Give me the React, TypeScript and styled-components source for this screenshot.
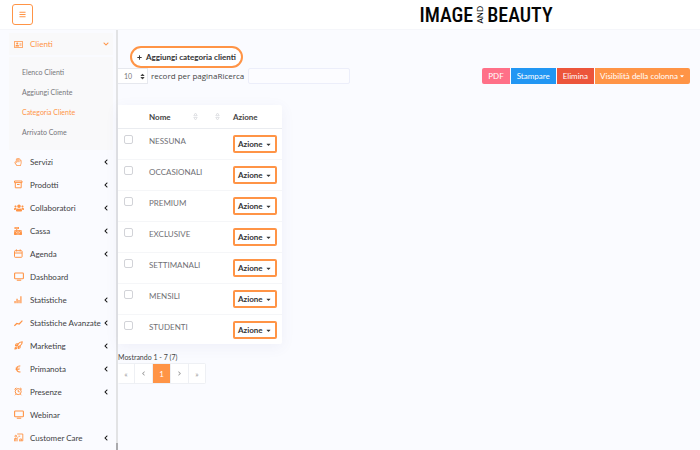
import React from "react";
import styled, { createGlobalStyle } from "styled-components";
import {
  FaBars,
  FaCaretDown,
  FaCashRegister,
  FaChevronDown,
  FaChevronLeft,
  FaChevronRight,
  FaEuroSign,
  FaPlus,
  FaRegAddressCard,
  FaRegHandPaper,
  FaSort,
  FaUsers,
} from "react-icons/fa";
import { LuRocket } from "react-icons/lu";

const orange = "#ff9446";

const GlobalStyle = createGlobalStyle`
  * { box-sizing: border-box; }
  body {
    margin: 0;
    background: #fafbff;
    color: #444;
    font: 8px/12px Lato, "Noto Sans", sans-serif;
  }
  button, input, select { font: inherit; color: inherit; margin: 0; }
  button { cursor: pointer; }
  a { color: inherit; text-decoration: none; }
  ul { list-style: none; margin: 0; padding: 0; }
`;

const Page = styled.div`
  display: flex;
  flex-direction: column;
  height: 100vh;
  overflow: hidden;
`;

const Header = styled.header`
  flex: none;
  display: grid;
  grid-template-columns: 118px 1fr;
  align-items: center;
  height: 30px;
  background: #fff;
  border-bottom: 1px solid #f5f6fa;
`;

const MenuButton = styled.button`
  display: grid;
  place-items: center;
  width: 21px;
  height: 21px;
  margin-left: 12px;
  padding: 0;
  border: 1px solid ${orange};
  border-radius: 3px;
  background: #fff;
  color: ${orange};
`;

const Logo = styled.a`
  display: flex;
  align-items: center;
  justify-self: center;
  margin-left: 154px;
  color: #050505;
  font: 500 20px/24px "Roboto Condensed", "Liberation Sans Narrow", sans-serif;
`;

const LogoAnd = styled.span`
  margin: 0 3px;
  writing-mode: vertical-rl;
  transform: rotate(180deg);
  font: 8px/8px Lato, sans-serif;
`;

const Body = styled.div`
  flex: 1;
  display: flex;
  min-height: 0;
`;

const Sidebar = styled.nav`
  flex: none;
  width: 116px;
  padding: 3px 3px 0 9px;
  overflow: hidden;
`;

const ScrollRail = styled.div`
  flex: none;
  display: flex;
  flex-direction: column;
  justify-content: flex-end;
  width: 2px;
  background: #e2e3e5;
`;

const ScrollThumb = styled.div`
  height: 7px;
  background: #aaaaad;
`;

const MenuLink = styled.a<{ $active?: boolean }>`
  display: grid;
  grid-template-columns: 11px minmax(0, 1fr) 6px;
  column-gap: 5px;
  align-items: center;
  height: ${(p) => (p.$active ? 22 : 23)}px;
  padding: 0 4px 0 5px;
  background: ${(p) => (p.$active ? "#f9f9fa" : "transparent")};
  color: ${(p) => (p.$active ? orange : "#3e3e43")};
  white-space: nowrap;
`;

const MenuIcon = styled.span`
  display: grid;
  place-items: center start;
  color: ${orange};
`;

const MenuArrow = styled.span<{ $active?: boolean }>`
  display: grid;
  place-items: center;
  color: ${(p) => (p.$active ? orange : "#111")};
`;

const Submenu = styled.ul`
  margin: 2px 0 0;
  padding: 5px 0 8px 13px;
  background: #f9f9fa;
`;

const SubLink = styled.a<{ $current?: boolean }>`
  display: block;
  font-size: 7px;
  line-height: 20px;
  color: ${(p) => (p.$current ? orange : "#77777b")};
`;

const Main = styled.main`
  flex: 1;
  min-width: 0;
  padding: 16px 10px 0 0;
`;

const AddButton = styled.button`
  display: flex;
  align-items: center;
  justify-content: center;
  gap: 4px;
  height: 22px;
  margin-left: 12px;
  padding: 0 5px;
  border: 2px solid ${orange};
  border-radius: 11px;
  background: #fff;
  color: #333;
  font-weight: 700;
`;

const Toolbar = styled.div`
  display: flex;
  align-items: center;
  justify-content: space-between;
`;

const Filters = styled.div`
  display: flex;
  align-items: center;
`;

const FilterLabel = styled.label`
  font-family: "Open Sans", sans-serif;
  white-space: nowrap;
`;

const SelectBox = styled.span`
  display: grid;
  grid-template-columns: 1fr 8px;
  align-items: center;
  width: 30px;
  height: 16px;
  margin-right: 3px;
  border: 1px solid #e6e8ee;
  border-left: 0;
  background: #fff;
`;

const LengthSelect = styled.select`
  grid-area: 1 / 1 / 2 / 3;
  width: 100%;
  height: 14px;
  padding: 0 0 0 6px;
  appearance: none;
  border: 0;
  background: transparent;
  color: #777;
  font-size: 7px;
`;

const SelectArrow = styled.span`
  grid-area: 1 / 2;
  display: grid;
  justify-items: start;
  pointer-events: none;
`;

const SearchInput = styled.input`
  width: 102px;
  height: 16px;
  margin-left: 4px;
  padding: 0 4px;
  border: 1px solid #eceefa;
  border-radius: 2px;
  background: #fcfcff;
`;

const Exports = styled.div`
  display: flex;
  gap: 1px;
`;

const ExportButton = styled.button<{ $color: string }>`
  display: flex;
  align-items: center;
  gap: 1px;
  height: 16px;
  padding: 0 6px;
  border: 0;
  background: ${(p) => p.$color};
  color: #fff;
  white-space: nowrap;
  &:first-child { border-radius: 2px 0 0 2px; }
  &:last-child { padding: 0 5px; border-radius: 0 2px 2px 0; }
`;

const Table = styled.table`
  width: 164px;
  margin-top: 21px;
  table-layout: fixed;
  border-collapse: separate;
  border-spacing: 0;
  border-radius: 0 2px 2px 0;
  background: #fff;
  box-shadow: 0 3px 14px rgba(80, 90, 150, 0.07);
`;

const HeadCell = styled.th<{ $width?: number }>`
  width: ${(p) => (p.$width ? `${p.$width}px` : "auto")};
  height: 24px;
  padding: 0;
  border-bottom: 1px solid #eaecf0;
  text-align: left;
  font-weight: 700;
`;

const HeadLine = styled.span<{ $end: number }>`
  display: flex;
  align-items: center;
  justify-content: space-between;
  padding-right: ${(p) => p.$end}px;
`;

const Cell = styled.td`
  height: 31px;
  padding: 6px 0 0;
  border-bottom: 1px solid #f5f6f8;
  vertical-align: top;
  color: #707075;
  tr:last-child > & { height: 29px; border-bottom: 0; }
`;

const Tick = styled.input`
  display: block;
  width: 9px;
  height: 9px;
  margin-left: 6px;
  appearance: none;
  border: 1px solid #d2d3d8;
  border-radius: 2px;
  background: #fff;
  &:checked { background: ${orange}; }
`;

const ActionButton = styled.button`
  display: flex;
  align-items: center;
  justify-content: space-between;
  width: 44px;
  height: 18px;
  padding: 0 3px;
  border: 2px solid ${orange};
  border-radius: 2px;
  background: #fff;
  color: #333;
  font-weight: 700;
`;

const Summary = styled.div`
  margin-top: 7px;
  font-size: 7px;
`;

const Pages = styled.div`
  display: inline-flex;
  border: 1px solid #eef0f4;
  border-left: 0;
  border-radius: 2px;
  background: #fff;
`;

const PageButton = styled.button<{ $current?: boolean }>`
  display: grid;
  place-items: center;
  width: 18px;
  height: 19px;
  padding: 0;
  border: 0;
  border-right: 1px solid #eef0f4;
  background: ${(p) => (p.$current ? orange : "#fff")};
  color: ${(p) => (p.$current ? "#fff" : "#999")};
  &:first-child { width: 17px; }
  &:last-child { width: 16px; border-right: 0; }
`;

function SortIcon() {
  return (
    <svg width="5" height="9" viewBox="0 0 5 9" fill="none" stroke="#d9dade" strokeWidth=".8" aria-hidden="true">
      <path d="M.8 3.6 2.5 1l1.7 2.6zM.8 5.4 2.5 8l1.7-2.6z" />
    </svg>
  );
}

function BoxIcon() {
  return (
    <svg width="9" height="9" viewBox="0 0 9 9" fill="none" stroke={orange} aria-hidden="true">
      <path d="M.5 1h7.5v1.6H.5zM1.3 2.8v5h5.9v-5M3 4.5h2.6" />
    </svg>
  );
}

function CalendarIcon() {
  return (
    <svg width="9" height="9" viewBox="0 0 9 9" fill="none" stroke={orange} aria-hidden="true">
      <rect x=".5" y="1.7" width="7.6" height="6.6" rx=".7" />
      <path d="M.5 4h7.6M2.4.4v2M6.2.4v2" />
    </svg>
  );
}

function ScreenIcon() {
  return (
    <svg width="10" height="9" viewBox="0 0 10 9" fill="none" stroke={orange} strokeWidth="1.1" aria-hidden="true">
      <rect x=".6" y="1" width="8.8" height="5.8" rx=".8" />
      <path d="M2.8 8.2h4.4" />
    </svg>
  );
}

function AlarmIcon() {
  return (
    <svg width="9" height="9" viewBox="0 0 9 9" fill="none" stroke={orange} aria-hidden="true">
      <circle cx="4.2" cy="4.6" r="3" />
      <path d="M4.2 2.8v2h1.5M.5 2.4 2.3.9M7.9 2.4 6.1.9M2 7.2l-1 1M6.4 7.2l1 1" />
    </svg>
  );
}

function TeacherIcon() {
  return (
    <svg width="10" height="9" viewBox="0 0 10 9" fill="none" stroke={orange} strokeWidth=".9" aria-hidden="true">
      <path d="M3.2 1h5.6v6.8H5M5.8 7.7V6h1.8v1.7M4.4 3.2h1.8" />
      <circle cx="1.8" cy="3.2" r=".9" />
      <path d="M.6 8.3V5.5h2l1.6-1M3.1 5.6v2.7M1.8 6v2.3" />
    </svg>
  );
}

function BarsIcon() {
  return (
    <svg width="8" height="9" viewBox="0 0 8 9" fill={orange} aria-hidden="true">
      <path d="M.4 6h1.3v2.3H.4zM2.4 3.8h1.3v4.5H2.4zM4.4 5h1.2v3.3H4.4zM6.3 1.2h1.2v7.1H6.3z" />
    </svg>
  );
}

function TrendIcon() {
  return (
    <svg width="9" height="8" viewBox="0 0 9 8" fill="none" stroke={orange} strokeWidth="1.2" aria-hidden="true">
      <path d="M.4 6.8 2.8 4.5l2.4.5L8.4 1.6" />
    </svg>
  );
}

const menu = [
  { label: "Servizi", icon: <FaRegHandPaper size={8} />, arrow: true },
  { label: "Prodotti", icon: <BoxIcon />, arrow: true },
  { label: "Collaboratori", icon: <FaUsers size={10} />, arrow: true },
  { label: "Cassa", icon: <FaCashRegister size={8} />, arrow: true },
  { label: "Agenda", icon: <CalendarIcon />, arrow: true },
  { label: "Dashboard", icon: <ScreenIcon />, arrow: false },
  { label: "Statistiche", icon: <BarsIcon />, arrow: true },
  { label: "Statistiche Avanzate", icon: <TrendIcon />, arrow: true },
  { label: "Marketing", icon: <LuRocket size={9} strokeWidth={3} />, arrow: true },
  { label: "Primanota", icon: <FaEuroSign size={8} />, arrow: true },
  { label: "Presenze", icon: <AlarmIcon />, arrow: true },
  { label: "Webinar", icon: <ScreenIcon />, arrow: false },
  { label: "Customer Care", icon: <TeacherIcon />, arrow: true },
];

const submenu = ["Elenco Clienti", "Aggiungi Cliente", "Categoria Cliente", "Arrivato Come"];

const categories = ["NESSUNA", "OCCASIONALI", "PREMIUM", "EXCLUSIVE", "SETTIMANALI", "MENSILI", "STUDENTI"];

export default function App() {
  return (
    <Page>
      <GlobalStyle />
      <Header>
        <MenuButton aria-label="Menu">
          <FaBars size={7} />
        </MenuButton>
        <Logo href="#">
          IMAGE<LogoAnd>AND</LogoAnd>BEAUTY
        </Logo>
      </Header>
      <Body>
        <Sidebar>
          <MenuLink href="#" $active>
            <MenuIcon><FaRegAddressCard size={9} /></MenuIcon>
            Clienti
            <MenuArrow $active><FaChevronDown size={6} /></MenuArrow>
          </MenuLink>
          <Submenu>
            {submenu.map((label) => (
              <li key={label}>
                <SubLink href="#" $current={label === "Categoria Cliente"}>{label}</SubLink>
              </li>
            ))}
          </Submenu>
          {menu.map((item) => (
            <MenuLink href="#" key={item.label}>
              <MenuIcon>{item.icon}</MenuIcon>
              {item.label}
              <MenuArrow>{item.arrow && <FaChevronLeft size={6} />}</MenuArrow>
            </MenuLink>
          ))}
        </Sidebar>
        <ScrollRail>
          <ScrollThumb />
        </ScrollRail>
        <Main>
          <AddButton>
            <FaPlus size={5} />
            Aggiungi categoria clienti
          </AddButton>
          <Toolbar>
            <Filters>
              <SelectBox>
                <LengthSelect id="length" defaultValue="10">
                  <option>10</option>
                  <option>25</option>
                  <option>50</option>
                </LengthSelect>
                <SelectArrow><FaSort size={7} /></SelectArrow>
              </SelectBox>
              <FilterLabel htmlFor="length">record per pagina</FilterLabel>
              <FilterLabel htmlFor="search">Ricerca</FilterLabel>
              <SearchInput id="search" type="search" />
            </Filters>
            <Exports>
              <ExportButton $color="#ff7088">PDF</ExportButton>
              <ExportButton $color="#2196f3">Stampare</ExportButton>
              <ExportButton $color="#ec553b">Elimina</ExportButton>
              <ExportButton $color={orange}>
                Visibilità della colonna
                <FaCaretDown size={6} />
              </ExportButton>
            </Exports>
          </Toolbar>
          <Table>
            <thead>
              <tr>
                <HeadCell $width={31} aria-label="Seleziona" />
                <HeadCell $width={54}>
                  <HeadLine $end={5}>Nome<SortIcon /></HeadLine>
                </HeadCell>
                <HeadCell $width={30}>
                  <HeadLine $end={13}><span /><SortIcon /></HeadLine>
                </HeadCell>
                <HeadCell>Azione</HeadCell>
              </tr>
            </thead>
            <tbody>
              {categories.map((name) => (
                <tr key={name}>
                  <Cell><Tick type="checkbox" aria-label={name} /></Cell>
                  <Cell colSpan={2}>{name}</Cell>
                  <Cell>
                    <ActionButton>
                      Azione
                      <FaCaretDown size={7} />
                    </ActionButton>
                  </Cell>
                </tr>
              ))}
            </tbody>
          </Table>
          <Summary>Mostrando 1 - 7 (7)</Summary>
          <Pages>
            <PageButton>«</PageButton>
            <PageButton aria-label="Precedente"><FaChevronLeft size={5} /></PageButton>
            <PageButton $current>1</PageButton>
            <PageButton aria-label="Successiva"><FaChevronRight size={5} /></PageButton>
            <PageButton>»</PageButton>
          </Pages>
        </Main>
      </Body>
    </Page>
  );
}
